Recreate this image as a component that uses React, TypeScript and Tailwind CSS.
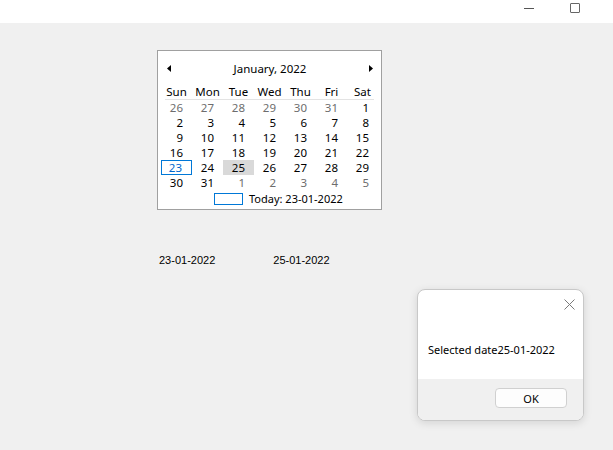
import React from "react";

const F = { fontFamily: '"Noto Sans", "Open Sans", sans-serif' } as const;

type Cell = { d: number; muted?: boolean; today?: boolean; sel?: boolean };

const rows: Cell[][] = [
  [{ d: 26, muted: true }, { d: 27, muted: true }, { d: 28, muted: true }, { d: 29, muted: true }, { d: 30, muted: true }, { d: 31, muted: true }, { d: 1 }],
  [2, 3, 4, 5, 6, 7, 8].map((d) => ({ d })),
  [9, 10, 11, 12, 13, 14, 15].map((d) => ({ d })),
  [16, 17, 18, 19, 20, 21, 22].map((d) => ({ d })),
  [{ d: 23, today: true }, { d: 24 }, { d: 25, sel: true }, { d: 26 }, { d: 27 }, { d: 28 }, { d: 29 }],
  [{ d: 30 }, { d: 31 }, { d: 1, muted: true }, { d: 2, muted: true }, { d: 3, muted: true }, { d: 4, muted: true }, { d: 5, muted: true }],
];

const days = ["Sun", "Mon", "Tue", "Wed", "Thu", "Fri", "Sat"];

function Calendar() {
  return (
    <div
      className="ml-[157px] mt-[27px] w-[225px] h-[160px] border border-[#a0a0a0] bg-white text-[11.5px] text-black leading-none"
      style={F}
    >
      <div className="h-[33px] flex items-center justify-between pl-[9px] pr-[8px] pt-[2px]">
        <svg width="4" height="7" viewBox="0 0 4 7">
          <path d="M4 0 L0 3.5 L4 7 Z" fill="#000" />
        </svg>
        <span className="pt-[1px]">January, 2022</span>
        <svg width="4" height="7" viewBox="0 0 4 7">
          <path d="M0 0 L4 3.5 L0 7 Z" fill="#000" />
        </svg>
      </div>
      <div className="ml-[3px] w-[217px]">
        <div className="grid grid-cols-7 h-[15px] items-center">
          {days.map((d) => (
            <div key={d} className="text-center">{d}</div>
          ))}
        </div>
        <div className="mx-[4px] h-px bg-[#e3e3e3]" />
        {rows.map((r, i) => (
          <div key={i} className="grid grid-cols-7 h-[15px]">
            {r.map((c, j) => (
              <div
                key={j}
                className={
                  "flex items-center justify-end pr-[9px] " +
                  (c.today
                    ? "border border-[#0078d7] text-[#0066cc] pr-[8px]"
                    : c.sel
                    ? "bg-[#d9d9d9]"
                    : c.muted
                    ? "text-[#6d6d6d]"
                    : "text-[#000]")
                }
              >
                {c.d}
              </div>
            ))}
          </div>
        ))}
        <div className="h-[17px] flex items-center justify-start gap-[6px] pl-[53px] text-[11px]">
          <div className="w-[29px] h-[12px] border border-[#0078d7]" />
          <span>Today: 23-01-2022</span>
        </div>
      </div>
    </div>
  );
}

export default function App() {
  return (
    <div className="relative w-[613px] h-[450px] bg-[#f0f0f0] overflow-hidden">
      <div className="h-[23px] bg-white relative">
        <div className="absolute left-[524px] top-[8px] w-[10px] h-px bg-[#555]" />
        <div className="absolute left-[570px] top-[3px] w-[10px] h-[10px] border border-[#666] rounded-[1px]" />
      </div>
      <Calendar />
      <div
        className="mt-[45px] flex text-[11px] text-black leading-none"
        style={{ fontFamily: '"Liberation Sans", Arial, sans-serif' }}
      >
        <span className="ml-[159px]">23-01-2022</span>
        <span className="ml-[58px]">25-01-2022</span>
      </div>

      <div
        className="absolute left-[417px] top-[289px] w-[167px] h-[132px] rounded-[8px] border border-[#c8c8c8] bg-white overflow-hidden flex flex-col shadow-[0_2px_8px_rgba(0,0,0,0.12)]"
        style={F}
      >
        <div className="h-[89px] relative">
          <svg className="absolute left-[146px] top-[9px]" width="11" height="11" viewBox="0 0 11 11">
            <path d="M0.5 0.5 L10.5 10.5 M10.5 0.5 L0.5 10.5" stroke="#7a7a7a" strokeWidth="1" />
          </svg>
          <div className="absolute left-[10px] top-[54px] text-[11px] leading-none text-black">
            Selected date25-01-2022
          </div>
        </div>
        <div className="flex-1 bg-[#f0f0f0] flex items-start justify-end pr-[16px] pt-[9px]">
          <div className="w-[72px] h-[20px] rounded-[4px] border border-[#d0d0d0] bg-[#fdfdfd] flex items-center justify-center text-[11px] text-black leading-none">
            OK
          </div>
        </div>
      </div>
    </div>
  );
}
